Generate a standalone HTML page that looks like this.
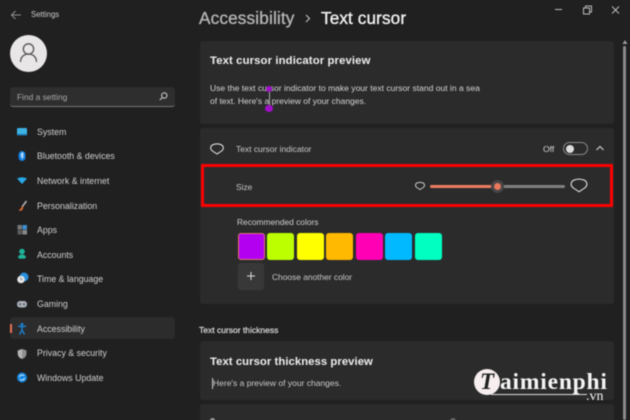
<!DOCTYPE html>
<html><head><meta charset="utf-8"><style>
*{box-sizing:border-box}
html,body{margin:0;padding:0;width:630px;height:420px;overflow:hidden;background:#202020}
body{font-family:"Liberation Sans",sans-serif;color:#d8d8d8;position:relative}
#w{position:absolute;left:0;top:0;width:630px;height:420px;filter:blur(.45px)}
.a{position:absolute;white-space:nowrap}
.n{position:absolute;left:37px;font-size:8.8px;line-height:12px;color:#cfcfcf}
.card{position:absolute;left:200px;width:414px;background:#2b2b2b;border-radius:3px}
.sw{position:absolute;top:233px;width:27px;height:27px;border-radius:3px}
svg{position:absolute;overflow:visible}
</style></head><body><div id="w">
<svg style="left:10px;top:9px" width="12" height="12" viewBox="0 0 12 12" fill="none" stroke="#8f8f8f" stroke-width="1"><path d="M1.500 6H11M5.500 2L1.500 6L5.500 10"/></svg>
<div class="a" style="left:31px;top:9px;font-size:7.8px;line-height:12px;color:#ccc">Settings</div>
<div class="a" style="left:10px;top:35px;width:37px;height:37px;border-radius:50%;background:#e8e6e6"></div>
<svg style="left:10px;top:35px" width="37" height="37" viewBox="0 0 37 37" fill="none" stroke="#555" stroke-width="1.300"><circle cx="18.500" cy="14" r="5.200"/><path d="M10.500 27c0-5 3.500-8 8-8s8 3 8 8"/></svg>
<div class="a" style="left:10px;top:87px;width:165px;height:20px;background:#2e2e2e;border-radius:3px;border-bottom:1px solid #777"></div>
<div class="a" style="left:17px;top:91px;font-size:8.400px;line-height:12px;color:#a8a8a8">Find a setting</div>
<svg style="left:158px;top:91px" width="11" height="11" viewBox="0 0 11 11" fill="none" stroke="#ccc" stroke-width="1"><circle cx="6.300" cy="4.500" r="2.700"/><path d="M4.300 6.500L1.800 9"/></svg>

<div class="a" style="left:10px;top:317px;width:165px;height:22px;background:#2c2c2c;border-radius:3px"></div>
<div class="a" style="left:10px;top:324px;width:2px;height:9px;background:#e8745a"></div>

<div class="n" style="top:126px">System</div>
<div class="n" style="top:150px">Bluetooth &amp; devices</div>
<div class="n" style="top:175px">Network &amp; internet</div>
<div class="n" style="top:200px">Personalization</div>
<div class="n" style="top:224px">Apps</div>
<div class="n" style="top:249px">Accounts</div>
<div class="n" style="top:273px">Time &amp; language</div>
<div class="n" style="top:298px">Gaming</div>
<div class="n" style="top:323px">Accessibility</div>
<div class="n" style="top:347px">Privacy &amp; security</div>
<div class="n" style="top:372px">Windows Update</div>

<svg style="left:0;top:0" width="40" height="390" viewBox="0 0 40 390">
<rect x="17" y="128" width="10" height="7" rx="1" fill="#3fb2e4"/><rect x="17" y="134" width="10" height="1.500" fill="#1b76b0"/>
<rect x="18.500" y="151" width="7" height="10" rx="3.500" fill="#0f7fe0"/><path d="M20.500 154l3 2.500-1.500 2v-6l1.500 1.500-3 2.500" stroke="#fff" stroke-width=".6" fill="none"/>
<path d="M17 178.500q5-2.500 10 0l-5 5.500z" fill="#27a9e8"/>
<path d="M26.500 201l-4.500 6" stroke="#b8b8b8" stroke-width="1.500"/><path d="M22.500 206l-4 5 3.500-.5 1.500-3z" fill="#d9672d"/>
<rect x="17.500" y="225" width="4.500" height="4.500" fill="#777"/><rect x="17.500" y="230" width="4.500" height="4.500" fill="#5c5c5c"/><rect x="22.500" y="230" width="4.500" height="4.500" fill="#8a8a8a"/><rect x="22.500" y="225" width="4.500" height="4.500" fill="#3d8fd0"/>
<circle cx="22" cy="251.500" r="2.800" fill="#1fb39a"/><path d="M18 258c0-2.500 1.800-3.500 4-3.500s4 1 4 3.500q-4 1.500-8 0z" fill="#1fb39a"/>
<circle cx="24" cy="277" r="4.500" fill="#2a90dd"/><circle cx="21" cy="279.500" r="3.800" fill="#e4e4e4"/><path d="M21 277.500v2h1.500" stroke="#555" stroke-width=".6" fill="none"/>
<rect x="17" y="301" width="10" height="6.500" rx="3" fill="#a9b0b8"/><circle cx="20" cy="304.200" r="1" fill="#555"/><circle cx="24" cy="304.200" r="1" fill="#555"/>
<circle cx="22" cy="324.500" r="1.500" fill="#1a86d8"/><path d="M18 326l4 1 4-1M22 327v3l-2.500 4.500M22 330l2.500 4.500" stroke="#1a86d8" stroke-width="1.300" fill="none"/>
<path d="M22 349l4.300 1.500v3c0 3-2.200 4.800-4.300 5.500-2.100-.7-4.300-2.500-4.300-5.500v-3z" fill="#b5b5b5"/><path d="M22 349l4.300 1.500v3c0 3-2.200 4.800-4.300 5.500z" fill="#8f8f8f"/>
<circle cx="22" cy="377.500" r="5" fill="#1687e0"/><path d="M19.500 377a2.600 2.600 0 0 1 4.500-1.200M24.500 378a2.600 2.600 0 0 1-4.500 1.200" stroke="#fff" stroke-width=".8" fill="none"/>
</svg>

<div class="a" style="left:199px;top:6px;font-size:17.200px;line-height:24px;color:#b5b5b5;-webkit-text-stroke:.35px #b5b5b5;letter-spacing:.15px">Accessibility</div>
<svg style="left:304px;top:14px" width="8" height="9" viewBox="0 0 8 9" fill="none" stroke="#bbb" stroke-width="1.200"><path d="M2 1l3.500 3.500L2 8"/></svg>
<div class="a" style="left:321px;top:6px;font-size:17.200px;line-height:24px;color:#f2f2f2;-webkit-text-stroke:.35px #f2f2f2;letter-spacing:.1px">Text cursor</div>

<svg style="left:550px;top:0" width="75" height="20" fill="none" stroke="#bbb" stroke-width="1"><path d="M5 9.500h7"/><rect x="33.500" y="8" width="6" height="6"/><path d="M35.500 8V6h6v6h-2"/><path d="M62 6.500l7 7M69 6.500l-7 7"/></svg>
<div class="a" style="left:623px;top:46px;width:3px;height:374px;background:#8a8a8a;border-radius:2px"></div>
<svg style="left:622px;top:40px" width="6" height="5"><path d="M3 0l2.500 4h-5z" fill="#999"/></svg>

<div class="card" style="top:41px;height:83px"></div>
<div class="a" style="left:210px;top:54px;font-size:11.300px;line-height:15px;font-weight:700;color:#efefef;letter-spacing:.13px">Text cursor indicator preview</div>
<div class="a" style="left:210px;top:82px;font-size:8.540px;line-height:12px;color:#d4d4d4">Use the text cursor indicator to make your text cursor stand out in a sea</div>
<div class="a" style="left:210px;top:95px;font-size:8.500px;line-height:12px;color:#d4d4d4">of text. Here's a preview of your changes.</div>
<div class="a" style="left:268.500px;top:89px;width:1.500px;height:19px;background:#aaa"></div>
<div class="a" style="left:266px;top:85.500px;width:6px;height:6px;border-radius:50%;background:#a010c8"></div>
<div class="a" style="left:265px;top:105px;width:8px;height:7px;border-radius:50%;background:#a010c8"></div>

<div class="card" style="top:128px;height:176px"></div>
<svg style="left:210px;top:143px" width="14" height="12" viewBox="0 0 14 12" fill="none" stroke="#eee" stroke-width="1"><path d="M7 11L2.500 8C-.3 6 .3 2.500 3.500 1.500Q7 .3 10.500 1.500C13.700 2.500 14.300 6 11.500 8z"/></svg>
<div class="a" style="left:236px;top:143px;font-size:8.450px;line-height:12px;color:#c8c8c8">Text cursor indicator</div>
<div class="a" style="left:543px;top:143px;font-size:8.600px;line-height:12px;color:#d4d4d4">Off</div>
<div class="a" style="left:563px;top:142px;width:25px;height:13px;border-radius:7px;border:1px solid #8a8a8a"></div>
<div class="a" style="left:565.500px;top:144.500px;width:8px;height:8px;border-radius:50%;background:#ddd"></div>
<svg style="left:595px;top:144px" width="10" height="8" fill="none" stroke="#ddd" stroke-width="1"><path d="M1.500 6L5 2.500 8.500 6"/></svg>

<div class="a" style="left:200.500px;top:164px;width:412.500px;height:43px;border:3.300px solid #ff0000"></div>
<div class="a" style="left:236px;top:181px;font-size:8.400px;line-height:12px;color:#c8c8c8">Size</div>
<svg style="left:415px;top:181px" width="10" height="10" viewBox="0 0 14 12" fill="none" stroke="#ddd" stroke-width="1.200"><path d="M7 11L2.500 8C-.3 6 .3 2.500 3.500 1.500Q7 .3 10.500 1.500C13.700 2.500 14.300 6 11.500 8z"/></svg>
<div class="a" style="left:430px;top:184.500px;width:67px;height:3px;background:#ec7c62;border-radius:2px"></div>
<div class="a" style="left:497px;top:184.500px;width:68px;height:3px;background:#808080;border-radius:2px"></div>
<div class="a" style="left:491px;top:180px;width:13px;height:13px;border-radius:50%;background:#454545"></div>
<div class="a" style="left:494px;top:183px;width:7px;height:7px;border-radius:50%;background:#e8775c"></div>
<svg style="left:570px;top:178px" width="18" height="15" viewBox="0 0 14 12" fill="none" stroke="#f0f0f0" stroke-width=".8"><path d="M7 11L2.500 8C-.3 6 .3 2.500 3.500 1.500Q7 .3 10.500 1.500C13.700 2.500 14.300 6 11.500 8z"/></svg>

<div class="a" style="left:237px;top:216px;font-size:8.400px;line-height:12px;color:#cfcfcf">Recommended colors</div>
<div class="sw" style="left:238px;background:#b400f0;border:1.500px solid #d8776a"></div>
<div class="sw" style="left:267px;background:#bcff00"></div>
<div class="sw" style="left:296.500px;background:#ffff00"></div>
<div class="sw" style="left:326px;background:#ffb900"></div>
<div class="sw" style="left:355.500px;background:#ff00b4"></div>
<div class="sw" style="left:385px;background:#00b9ff"></div>
<div class="sw" style="left:414.500px;background:#00ffc0"></div>
<div class="a" style="left:238px;top:263px;width:26px;height:27px;background:#383838;border-radius:3px"></div>
<svg style="left:246px;top:271px" width="10" height="10" stroke="#ddd" stroke-width="1"><path d="M5 1v8M1 5h8"/></svg>
<div class="a" style="left:272px;top:271px;font-size:8.400px;line-height:12px;color:#c8c8c8">Choose another color</div>

<div class="a" style="left:199px;top:324px;font-size:8.500px;line-height:12px;color:#dcdcdc;-webkit-text-stroke:.2px #dcdcdc">Text cursor thickness</div>
<div class="card" style="top:341px;height:59px"></div>
<div class="a" style="left:210px;top:355px;font-size:11.300px;line-height:15px;font-weight:700;color:#efefef;letter-spacing:.06px">Text cursor thickness preview</div>
<div class="a" style="left:212px;top:378px;width:1px;height:11px;background:#ccc"></div>
<div class="a" style="left:213px;top:377px;font-size:8.500px;line-height:12px;color:#c8c8c8">Here's a preview of your changes.</div>
<div class="card" style="top:404px;height:20px"></div>
<div class="a" style="left:210px;top:418px;width:5px;height:5px;border-radius:50%;background:#999"></div>
<div class="a" style="left:450px;top:418px;width:6px;height:6px;border-radius:50%;background:#666"></div>

<div class="a" style="left:474px;top:369px;width:26px;height:26px;border-radius:50%;background:#f7efef"></div>
<div class="a" style="left:474px;top:368px;width:26px;text-align:center;font-family:'Liberation Serif',serif;font-style:italic;font-weight:700;font-size:23px;line-height:28px;color:#202020">T</div>
<div class="a" style="left:500px;top:368px;font-family:'Liberation Serif',serif;font-weight:700;font-size:23.500px;line-height:28px;color:#f4f4f4;letter-spacing:.8px">aimienphi</div>
<div class="a" style="left:491px;top:394px;width:96px;height:1px;background:#ddd"></div>
<div class="a" style="left:586px;top:390px;font-family:'Liberation Serif',serif;font-size:14px;line-height:14px;color:#f4f4f4">.vn</div>
</div></body></html>
